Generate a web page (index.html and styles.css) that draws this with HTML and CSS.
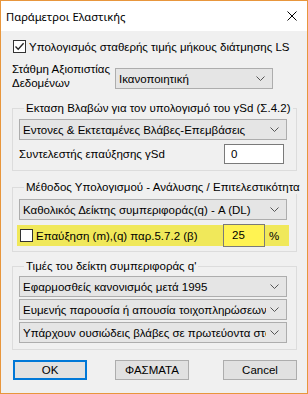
FILE: index.html
```html
<!DOCTYPE html>
<html lang="el">
<head>
  <meta charset="UTF-8">
  <title>Παράμετροι Ελαστικής</title>
  <link rel="stylesheet" href="styles.css">
</head>
<body>
  <div class="window">
    <div class="titlebar">
      <span class="title">Παράμετροι Ελαστικής</span>
      <svg class="close" width="10" height="10" viewBox="0 0 10 10">
        <path d="M0.5 0.5 L9.5 9.5 M9.5 0.5 L0.5 9.5" stroke="#000" stroke-width="1"/>
      </svg>
    </div>

    <div class="content">
      <label class="check-row">
        <span class="box checked">
          <svg width="11" height="11" viewBox="0 0 11 11">
            <path d="M1.5 5.5 L4.2 8.3 L9.6 2.2" fill="none" stroke="#222" stroke-width="1.3"/>
          </svg>
        </span>
        Υπολογισμός σταθερής τιμής μήκους διάτμησης LS
      </label>

      <div class="level-row">
        <div class="level-label">Στάθμη Αξιοπιστίας<br>Δεδομένων</div>
        <div class="combo combo-level">
          <span>Ικανοποιητική</span>
          <svg class="arrow" width="9" height="5" viewBox="0 0 9 5"><path d="M0.5 0.5 L4.5 4.5 L8.5 0.5" fill="none" stroke="#555"/></svg>
        </div>
      </div>

      <fieldset class="group group-damage">
        <legend>Εκταση Βλαβών για τον υπολογισμό του γSd (Σ.4.2)</legend>
        <div class="combo">
          <span>Εντονες &amp; Εκτεταμένες Βλάβες-Επεμβάσεις</span>
          <svg class="arrow" width="9" height="5" viewBox="0 0 9 5"><path d="M0.5 0.5 L4.5 4.5 L8.5 0.5" fill="none" stroke="#555"/></svg>
        </div>
        <div class="field-row">
          <span>Συντελεστής επαύξησης γSd</span>
          <div class="textbox">0</div>
        </div>
      </fieldset>

      <fieldset class="group group-method">
        <legend>Μέθοδος Υπολογισμού - Ανάλυσης / Επιτελεστικότητα</legend>
        <div class="combo">
          <span>Καθολικός Δείκτης συμπεριφοράς(q) - A (DL)</span>
          <svg class="arrow" width="9" height="5" viewBox="0 0 9 5"><path d="M0.5 0.5 L4.5 4.5 L8.5 0.5" fill="none" stroke="#555"/></svg>
        </div>
        <div class="highlight">
          <span class="box"></span>
          <span class="hl-label">Επαύξηση (m),(q) παρ.5.7.2 (β)</span>
          <div class="textbox yellow">25</div>
          <span class="percent">%</span>
        </div>
      </fieldset>

      <fieldset class="group group-q">
        <legend>Τιμές του δείκτη συμπεριφοράς q'</legend>
        <div class="combo">
          <span>Εφαρμοσθείς κανονισμός μετά 1995</span>
          <svg class="arrow" width="9" height="5" viewBox="0 0 9 5"><path d="M0.5 0.5 L4.5 4.5 L8.5 0.5" fill="none" stroke="#555"/></svg>
        </div>
        <div class="combo">
          <span>Ευμενής παρουσία ή απουσία τοιχοπληρώσεων</span>
          <svg class="arrow" width="9" height="5" viewBox="0 0 9 5"><path d="M0.5 0.5 L4.5 4.5 L8.5 0.5" fill="none" stroke="#555"/></svg>
        </div>
        <div class="combo">
          <span>Υπάρχουν ουσιώδεις βλάβες σε πρωτεύοντα στοιχεία</span>
          <svg class="arrow" width="9" height="5" viewBox="0 0 9 5"><path d="M0.5 0.5 L4.5 4.5 L8.5 0.5" fill="none" stroke="#555"/></svg>
        </div>
      </fieldset>

      <div class="buttons">
        <button class="btn default">OK</button>
        <button class="btn">ΦΑΣΜΑΤΑ</button>
        <button class="btn cancel">Cancel</button>
      </div>
    </div>
  </div>
</body>
</html>
```

FILE: styles.css
```css
body {
  margin: 0;
  font-family: "Liberation Sans", Arial, sans-serif;
  font-size: 11.5px;
  color: #000;
}

.window {
  width: 308px;
  height: 394px;
  box-sizing: border-box;
  border: 1px solid #e8963c;
  background-color: #f0f0f0;
  overflow: hidden;
}

.titlebar {
  height: 30px;
  background-color: #fff;
  display: flex;
  align-items: center;
  padding: 0 10px 0 5px;
}

.title {
  font-family: "Noto Sans", sans-serif;
  font-size: 11.2px;
  flex: 1;
}

.content {
  padding: 9px 10px 0 11px;
}

.check-row {
  display: flex;
  align-items: center;
  height: 13px;
  padding-left: 1px;
  white-space: nowrap;
}

.box {
  width: 13px;
  height: 13px;
  flex-shrink: 0;
  box-sizing: border-box;
  border: 1px solid #333;
  background-color: #fff;
  margin-right: 3px;
  display: flex;
  align-items: center;
  justify-content: center;
}

.level-row {
  display: flex;
  margin-top: 9px;
  height: 28px;
}

.level-label {
  line-height: 14px;
  width: 103px;
  white-space: nowrap;
}

.combo {
  height: 21px;
  box-sizing: border-box;
  border: 1px solid #adadad;
  background-color: #e5e5e5;
  display: flex;
  align-items: center;
  padding: 0 7px 0 3px;
  overflow: hidden;
  white-space: nowrap;
}

.combo span {
  flex: 1;
  min-width: 0;
  overflow: hidden;
}

.arrow {
  flex-shrink: 0;
  margin-left: 4px;
}

.combo-level {
  width: 158px;
  margin-top: 6px;
}

.group {
  min-width: 0;
  margin: 11px 0 0 0;
  border: 1px solid #dcdcdc;
  padding: 4px 9px 6px 6px;
}

.group legend {
  padding: 0 2px;
  margin-left: 5px;
  line-height: 14px;
  white-space: nowrap;
}

.group-method {
  margin-top: 9px;
  padding-top: 5px;
  padding-bottom: 5px;
}

.group-q {
  margin-top: 7px;
  padding-top: 3px;
  padding-bottom: 6px;
}

.group-q .combo + .combo {
  margin-top: 2px;
}

.field-row {
  display: flex;
  align-items: center;
  justify-content: space-between;
  margin-top: 4px;
  padding-right: 3px;
}

.textbox {
  width: 60px;
  height: 20px;
  box-sizing: border-box;
  border: 1px solid #7a7a7a;
  background-color: #fff;
  padding: 3px 0 0 6px;
}

.highlight {
  display: flex;
  align-items: center;
  margin: 5px -2px 0 -2px;
  height: 21px;
  background-color: #f0e85a;
  padding-left: 3px;
  white-space: nowrap;
}

.hl-label {
  flex: 1;
}

.textbox.yellow {
  width: 42px;
  height: 23px;
  background-color: #fff352;
  padding-top: 4px;
  padding-left: 8px;
}

.percent {
  width: 20px;
  padding-left: 4px;
}

.buttons {
  display: flex;
  margin-top: 10px;
  padding-left: 1px;
}

.btn {
  width: 74px;
  height: 20px;
  box-sizing: border-box;
  border: 1px solid #adadad;
  background-color: #e1e1e1;
  font-family: "Liberation Sans", Arial, sans-serif;
  font-size: 11.5px;
  color: #000;
  padding: 0;
  margin-right: 28px;
}

.btn.default {
  border: 2px solid #0078d7;
}

.btn.cancel {
  margin-left: auto;
  margin-right: 0;
}
```
